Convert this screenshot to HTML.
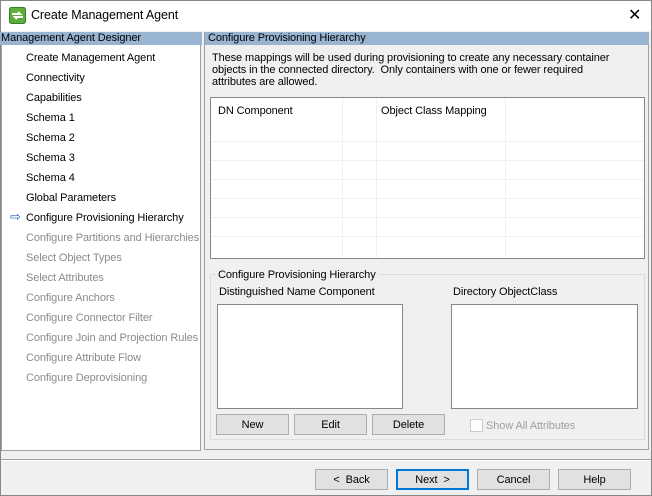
<!DOCTYPE html>
<html><head><style>
*{margin:0;padding:0;box-sizing:border-box}
body{width:652px;height:496px;background:#f0f0f0;font-family:"Liberation Sans",sans-serif;font-size:11px;letter-spacing:-0.1px;color:#000;position:relative;overflow:hidden}
.a{position:absolute}
.t{white-space:nowrap}
.btn{position:absolute;background:#e1e1e1;border:1px solid #adadad;text-align:center;line-height:20px;height:21px}
.hdr{background:#99b4d1;height:13px;line-height:13px;padding-left:3px}
.item{position:absolute;left:26px;white-space:nowrap}
.g{color:#8a8a8a}
</style></head><body>
<div class="a" style="left:0;top:0;width:652px;height:496px;border:1px solid #888"></div>
<div class="a" style="left:1px;top:1px;width:650px;height:30px;background:#fff"></div>
<svg class="a" style="left:9px;top:7px" width="17" height="17"><rect x="0.5" y="0.5" width="16" height="16" rx="2" fill="#5cad3c" stroke="#3c7d2a"/><path d="M3 7h8l-2-2M14 10H6l2 2" stroke="#fff" stroke-width="2" fill="none"/></svg>
<div class="a t" style="left:31px;top:8px;font-size:12.5px">Create Management Agent</div>
<div class="a t" style="left:628px;top:5px;font-size:16px">✕</div>

<div class="a" style="left:1px;top:32px;width:200px;height:419px;background:#fff;border:1px solid #a0a0a0;border-top:none"></div>
<div class="a hdr t" style="left:0;top:32px;width:202px;padding-left:1px">Management Agent Designer</div>
<div class="item" style="top:52px">Create Management Agent</div>
<div class="item" style="top:72px">Connectivity</div>
<div class="item" style="top:92px">Capabilities</div>
<div class="item" style="top:112px">Schema 1</div>
<div class="item" style="top:132px">Schema 2</div>
<div class="item" style="top:152px">Schema 3</div>
<div class="item" style="top:172px">Schema 4</div>
<div class="item" style="top:192px">Global Parameters</div>
<div class="a" style="left:10px;top:209px;color:#2a5fb0;font-size:13px">⇨</div>
<div class="item" style="top:212px">Configure Provisioning Hierarchy</div>
<div class="item g" style="top:232px">Configure Partitions and Hierarchies</div>
<div class="item g" style="top:252px">Select Object Types</div>
<div class="item g" style="top:272px">Select Attributes</div>
<div class="item g" style="top:292px">Configure Anchors</div>
<div class="item g" style="top:312px">Configure Connector Filter</div>
<div class="item g" style="top:332px">Configure Join and Projection Rules</div>
<div class="item g" style="top:352px">Configure Attribute Flow</div>
<div class="item g" style="top:372px">Configure Deprovisioning</div>

<div class="a" style="left:204px;top:32px;width:445px;height:418px;border:1px solid #a0a0a0;border-top:none"></div>
<div class="a hdr t" style="left:205px;top:32px;width:444px">Configure Provisioning Hierarchy</div>
<div class="a" style="left:212px;top:52px;line-height:12px;width:418px">These mappings will be used during provisioning to create any necessary container objects in the connected directory.&nbsp; Only containers with one or fewer required attributes are allowed.</div>
<div class="a" style="left:210px;top:97px;width:435px;height:162px;background:#fff;border:1px solid #828790"></div>
<div class="a t" style="left:218px;top:105px">DN Component</div>
<div class="a t" style="left:381px;top:105px">Object Class Mapping</div>
<svg class="a" style="left:211px;top:98px" width="433" height="160">
<g stroke="#f0f0f0" stroke-width="1">
<path d="M131.5 0V160M165.5 0V160M294.5 0V160"/>
<path d="M0 43.5H433M0 62.5H433M0 81.5H433M0 100.5H433M0 119.5H433M0 138.5H433"/>
</g></svg>

<div class="a" style="left:210px;top:274px;width:435px;height:166px;border:1px solid #dcdcdc"></div>
<div class="a t" style="left:216px;top:269px;background:#f0f0f0;padding:0 2px">Configure Provisioning Hierarchy</div>
<div class="a t" style="left:219px;top:286px">Distinguished Name Component</div>
<div class="a t" style="left:453px;top:286px">Directory ObjectClass</div>
<div class="a" style="left:217px;top:304px;width:186px;height:105px;background:#fff;border:1px solid #828790"></div>
<div class="a" style="left:451px;top:304px;width:187px;height:105px;background:#fff;border:1px solid #828790"></div>
<div class="btn" style="left:216px;top:414px;width:73px">New</div>
<div class="btn" style="left:294px;top:414px;width:73px">Edit</div>
<div class="btn" style="left:372px;top:414px;width:73px">Delete</div>
<div class="a" style="left:470px;top:419px;width:13px;height:13px;border:1px solid #ccc;background:#fff"></div>
<div class="a t g" style="left:486px;top:420px;color:#a0a0a0">Show All Attributes</div>

<div class="a" style="left:1px;top:459px;width:650px;height:1px;background:#a0a0a0"></div>
<div class="a" style="left:1px;top:460px;width:650px;height:1px;background:#fff"></div>
<div class="btn" style="left:315px;top:469px;width:73px">&lt;&nbsp; Back</div>
<div class="btn" style="left:396px;top:469px;width:73px;border:2px solid #0078d7;line-height:18px">Next &nbsp;&gt;</div>
<div class="btn" style="left:477px;top:469px;width:73px">Cancel</div>
<div class="btn" style="left:558px;top:469px;width:73px">Help</div>
</body></html>
